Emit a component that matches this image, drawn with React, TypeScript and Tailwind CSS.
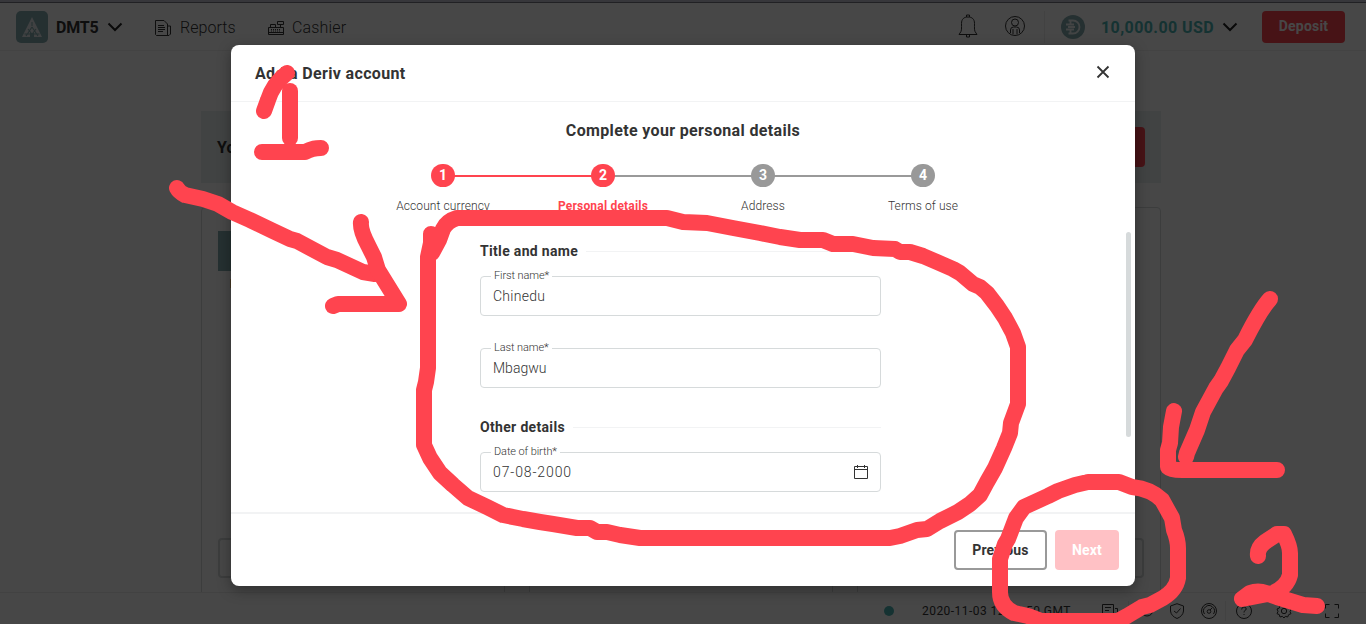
import React from "react";

const steps = [
  { n: 1, label: "Account currency", state: "done" },
  { n: 2, label: "Personal details", state: "current" },
  { n: 3, label: "Address", state: "todo" },
  { n: 4, label: "Terms of use", state: "todo" },
];

const marks = [
  "M287 73C278 80 271 90 268 100L264 111",
  "M290 91V138",
  "M262 152H305C312 148 316 148 321 148",
  "M177 188Q179 192 185 195L203 199L218 204L232 212L250 220L273 231L290 239L297 241L327 257L337 260L363 272L375 274",
  "M361 222Q360 230 368 245L374 257L378 270L399 304H338L333 306",
  "M431 234L431 243L428 257V368L426 382L424 390V445L430 458L440 473L453 485L468 498L487 507L503 515L523 519L540 522L553 524L577 528H590L597 532H607L620 535L640 538H890L900 536L917 530L927 529L940 521L958 512L970 504L980 495L987 482L995 468L1004 448L1010 433L1011 423L1018 404V347L1013 333L1005 318L997 306L987 293L980 287L973 284L960 273L953 269L937 262L923 256L910 252H900L895 249L873 248L853 244H833L823 240H800L780 237L760 233L733 228L707 223L683 222L667 218H457Q447 221 443 229L439 240L432 253",
  "M1088 482H1119L1132 487Q1151 489 1162 500L1172 518L1174 530Q1178 540 1178 548V578Q1176 590 1163 598L1150 605L1142 607L1127 616L1118 621H1041L1028 616L1014 613Q1000 606 1000 592V559L1005 544L1008 539L1016 518L1024 507L1048 496L1058 491L1075 485L1088 482",
  "M1270 299Q1260 310 1245 340L1237 350L1228 368L1221 381L1216 388L1203 412L1197 430L1187 453L1186 457",
  "M1174 411L1171 427L1170 443L1168 450V467Q1171 470 1182 470H1277",
  "M1258 556Q1257 548 1265 542L1277 534H1284Q1290 546 1290 553V575Q1287 587 1273 593L1242 599L1250 593Q1258 590 1266 593L1277 597L1290 601L1303 605L1317 606",
];

function Svg({ w, h = w, vb, className = "", sw = 1, children }: any) {
  return (
    <svg width={w} height={h} viewBox={vb || `0 0 ${w} ${h}`} fill="none" stroke="currentColor" strokeWidth={sw} className={"shrink-0 " + className}>
      {children}
    </svg>
  );
}

const Chevron = () => (
  <Svg w={16} h={10} sw={2} className="text-[#222]"><path d="M1.5 1.5L8 8L14.5 1.5" /></Svg>
);

function Field({ label, value, top, tracking = "tracking-[0.2px]", children }: any) {
  return (
    <div className={"relative flex h-10 items-center justify-between rounded border border-[#d6dadb] pl-3 pr-3 " + top}>
      <span className="absolute -top-[9px] left-[10px] bg-white px-[3px] text-[11px] leading-4 font-light tracking-[-0.1px]">{label}</span>
      <span className={"text-[14px] font-light " + tracking}>{value}</span>
      {children}
    </div>
  );
}

function Legend({ children }: any) {
  return (
    <div className="flex h-6 items-center gap-2">
      <span className="text-[14px] font-bold tracking-[0.33px]">{children}</span>
      <span className="mt-px h-px grow bg-[#f2f3f4]" />
    </div>
  );
}

export default function App() {
  return (
    <div className="relative flex h-[624px] w-[1366px] flex-col overflow-hidden bg-white font-['Roboto',sans-serif] text-[#333]">
      <div className="h-[3px] shrink-0 border-b border-[#777783] bg-[#c4c4d4]" />
      <header className="flex h-12 shrink-0 items-center border-b border-[#f0f0f0] pl-4 pr-[21px]">
        <svg width="32" height="32" viewBox="0 0 32 32" className="shrink-0">
          <rect width="32" height="32" rx="5" fill="#85acb0" />
          <path d="M16 6L26 26H6Z" fill="#e4eaec" />
          <path d="M16 11V15M16 16L10 25M16 16L22 25M12 18L15 22L16 25L17 22L20 18M8.5 23H23.500" stroke="#85acb0" strokeWidth="1.100" fill="none" />
          <path d="M14 22H18V26H14Z" fill="#85acb0" />
        </svg>
        <span className="ml-2 mr-2 w-[43px] whitespace-nowrap pt-0.5 text-[16px] font-bold tracking-[-0.2px]">DMT5</span>
        <Chevron />
        <Svg w={16} h={16} className="ml-8 mt-0.5"><path d="M.5.5H9L12.500 4V15.500H1.500L.5 14.500ZM12.500 6H15.500V14L14 15.500H12M3 5.500H9M3 7.500H10M3 9.500H10M3 11.500H8" /></Svg>
        <span className="ml-[9px] w-14 whitespace-nowrap pt-0.5 text-[16px] font-light tracking-[0.05px]">Reports</span>
        <Svg w={16} h={16} className="ml-8 mt-0.5"><path d="M.5 14.500V7.500H15.500V14.500ZM.5 12.500H15.500M2.500 7V4.500H7.500V7M9.500 1.500H15.500V4.500H9.500ZM12.500 4.500V7" /><path d="M3 9.500H13M3 11H13" strokeDasharray="1 1" /></Svg>
        <span className="ml-2 whitespace-nowrap pt-0.5 text-[16px] font-light tracking-[0.18px]">Cashier</span>
        <div className="grow" />
        <Svg w={20} h={24} className="-mt-0.5"><path d="M2 19C4 17 3.500 14 3.500 9.500C3.500 5 6 3 10 3S16.500 5 16.500 9.500C16.500 14 16 17 18 19L19 20.500H1ZM8.500 3V1H11.500V3M8.500 21V23H11.500V21" /></Svg>
        <Svg w={20} h={20} className="ml-[27px] -mt-0.5"><circle cx="10" cy="10" r="9.500" /><circle cx="10" cy="6.500" r="3.500" /><path d="M5.500 17V14Q5.500 11 8.500 11H11.500Q14.500 11 14.500 14V17M8 13V18M12 13V18" /></Svg>
        <div className="mr-[16px] ml-[19px] h-8 w-px bg-[#eee]" />
        <svg width="24" height="24" viewBox="0 0 24 24" className="shrink-0">
          <circle cx="12" cy="12" r="12" fill="#85acb0" />
          <path d="M7.500 5.500H12A6.500 6.500 0 0 1 12 18.500H7.500M5 9.500H13M5 14.500H13M7 12H14M9.500 5V10M9.500 14V19" fill="none" stroke="#f0f4f5" strokeWidth="1.800" />
        </svg>
        <span className="ml-4 mr-[7px] w-[114px] whitespace-nowrap pt-0.5 text-[16px] font-bold tracking-[0.42px] text-[#4bb4b3]">10,000.00 USD</span>
        <Chevron />
        <div className="ml-6 flex h-8 w-[83px] items-center justify-center rounded bg-[#ff444f] text-[14px] font-bold tracking-[0.2px] text-white">Deposit</div>
      </header>

      <main className="flex min-h-0 grow flex-col px-[201px] pt-[60px] pr-[205px]">
        <div className="flex h-[72px] shrink-0 items-center justify-between bg-[#eaf0f0] px-4">
          <span className="pt-0.5 text-[16px] font-bold">You have a demo account</span>
          <span className="h-10 w-24 rounded bg-[#ff444f]" />
        </div>
        <div className="mt-6 flex h-[386px] shrink-0 gap-6">
          {[0, 1, 2].map((i) => (
            <section key={i} className="flex w-[304px] flex-col justify-between rounded-t border border-[#d6dadb] p-4 pb-[14px]">
              <div className="mt-[7px]">
                <div className="h-10 w-24 bg-[#85acb0]" />
                <div className="ml-[12px] mt-1 text-[12px] font-bold">Demo</div>
              </div>
              <div className="h-10 rounded border-2 border-[#d6dadb]" />
            </section>
          ))}
        </div>
      </main>

      <footer className="flex h-8 shrink-0 items-center border-t border-[#eee] bg-white pl-[884px] pt-1">
        <span className="size-[10px] rounded-full bg-[#4bb4b3]" />
        <span className="ml-7 w-[180px] whitespace-nowrap text-[12px] font-normal tracking-[0.45px]">2020-11-03 12:26:50 GMT</span>
        <Svg w={16} h={16}><path d="M.5 1.500H11.500V10.500H5L2.500 13V10.500H.5ZM3 4.500H9M3 7.500H7M13 5.500H15.500V12.500L13 10.500" /></Svg>
        <span className="mx-[10px] h-5 w-px bg-[#eee]" />
        <Svg w={16} h={16}><circle cx="8" cy="7" r="6" /></Svg>
        <Svg w={14} h={16} className="ml-[15px]"><path d="M7 .7L13.500 3V8Q13 13 7 15.500Q1 13 .5 8V3ZM4 8L6.500 10L10.500 5.500" /></Svg>
        <Svg w={16} h={16} className="ml-[17px]"><circle cx="8" cy="8" r="7.500" /><path d="M3.500 11A5.400 5.400 0 1 1 12.500 11" /><circle cx="8" cy="8.500" r="1.800" /><path d="M9 7L11 5" /></Svg>
        <span className="mx-2 h-5 w-px bg-[#eee]" />
        <Svg w={16} h={16} className="ml-[2px]"><circle cx="8" cy="8" r="7.500" /><path d="M5.700 6.500Q5.700 4 8 4T10.200 6Q10.200 7 8 8.500V9.500M8 11V12" /></Svg>
        <Svg w={16} h={16} vb="0 0 24 24" sw={1.5} className="ml-6"><circle cx="12" cy="12" r="4" /><path d="M12 1.500L14.500 4.500L18.500 3.500L19.500 7.500L22.500 9.500L21 13L22.500 16L19 17.500L17.500 21L14 20L12 22.500L9.500 20L6 21L5 17.500L1.500 16L3 12.500L1.500 9L5 7.500L6 3.500L9.500 4.500Z" /></Svg>
        <Svg w={14} h={14} className="ml-[33px]"><path d="M.5 4.500V.5H4.500M9.500.5H13.500V4.500M13.500 9.500V13.500H9.500M4.500 13.500H.5V9.500" /></Svg>
      </footer>

      <div className="absolute inset-0 flex justify-center bg-black/72 pt-[45px]">
        <div className="flex h-[541px] w-[904px] flex-col rounded-lg bg-white shadow-[0_4px_14px_rgba(0,0,0,0.35)]">
          <div className="flex h-[57px] shrink-0 items-center justify-between border-b border-[#f2f3f4] pl-6 pr-[25px]">
            <h1 className="pt-0.5 text-[16px] font-bold tracking-[0.34px]">Add a Deriv account</h1>
            <Svg w={14} h={14} sw={1.8} className="-mt-[3px]"><path d="M1.500 1.500L12.500 12.500M12.500 1.500L1.500 12.500" /></Svg>
          </div>
          <div className="flex min-h-0 grow flex-col">
            <h2 className="mt-[17px] text-center text-[16px] leading-6 font-bold tracking-[0.35px]">Complete your personal details</h2>
            <div className="mx-auto mt-5 flex w-[640px]">
              {steps.map((s, i) => (
                <div key={s.n} className="relative flex w-40 flex-col items-center">
                  {i > 0 && <div className={"absolute top-3 right-1/2 h-[2px] w-40 " + (i === 1 ? "bg-[#ff444f]" : "bg-[#999]")} />}
                  <div className={"relative z-10 mt-px flex h-[23px] w-6 items-center justify-center rounded-full text-[14px] font-bold text-white " + (s.state === "todo" ? "bg-[#999]" : "bg-[#ff444f]")}>{s.n}</div>
                  <div className={"mt-[10px] whitespace-nowrap text-[12px] leading-[18px] " + (s.state === "current" ? "font-bold tracking-[0.2px] text-[#ff444f]" : "font-light tracking-[0.1px]")}>{s.label}</div>
                </div>
              ))}
            </div>
            <div className="flex grow justify-end pr-1">
              <div className="mr-[245px] flex w-[401px] flex-col pt-[24px]">
                <Legend>Title and name</Legend>
                <Field label="First name*" value="Chinedu" top="mt-[13px]" tracking="tracking-[0.28px]" />
                <Field label="Last name*" value="Mbagwu" top="mt-8 mb-[27px]" tracking="tracking-[0px]" />
                <Legend>Other details</Legend>
                <Field label="Date of birth*" value="07-08-2000" top="mt-[13px]" tracking="tracking-[0.88px]">
                  <Svg w={14} h={14}><path d="M.5 1.500H13.500V13.500H.5ZM.5 4.500H13.500M3.500 0V3M10.500 0V3" /></Svg>
                </Field>
              </div>
              <div className="mt-[17px] h-[205px] w-[5px] rounded-full bg-[#d6dadb]" />
            </div>
          </div>
          <div className="flex h-[74px] shrink-0 items-center justify-end gap-2 border-t-2 border-[#f2f3f4] pr-4 text-[14px] font-bold tracking-[0.15px]">
            <button className="h-10 w-[93px] rounded border-2 border-[#999]">Previous</button>
            <button className="h-10 w-16 rounded bg-[#ffc1c5] text-white">Next</button>
          </div>
        </div>
      </div>

      <svg width="1366" height="624" viewBox="0 0 1366 624" className="pointer-events-none absolute inset-0 z-20" fill="none" stroke="#ff444f" strokeWidth="16" strokeLinecap="round" strokeLinejoin="round">
        {marks.map((d) => <path key={d} d={d} />)}
      </svg>
    </div>
  );
}
